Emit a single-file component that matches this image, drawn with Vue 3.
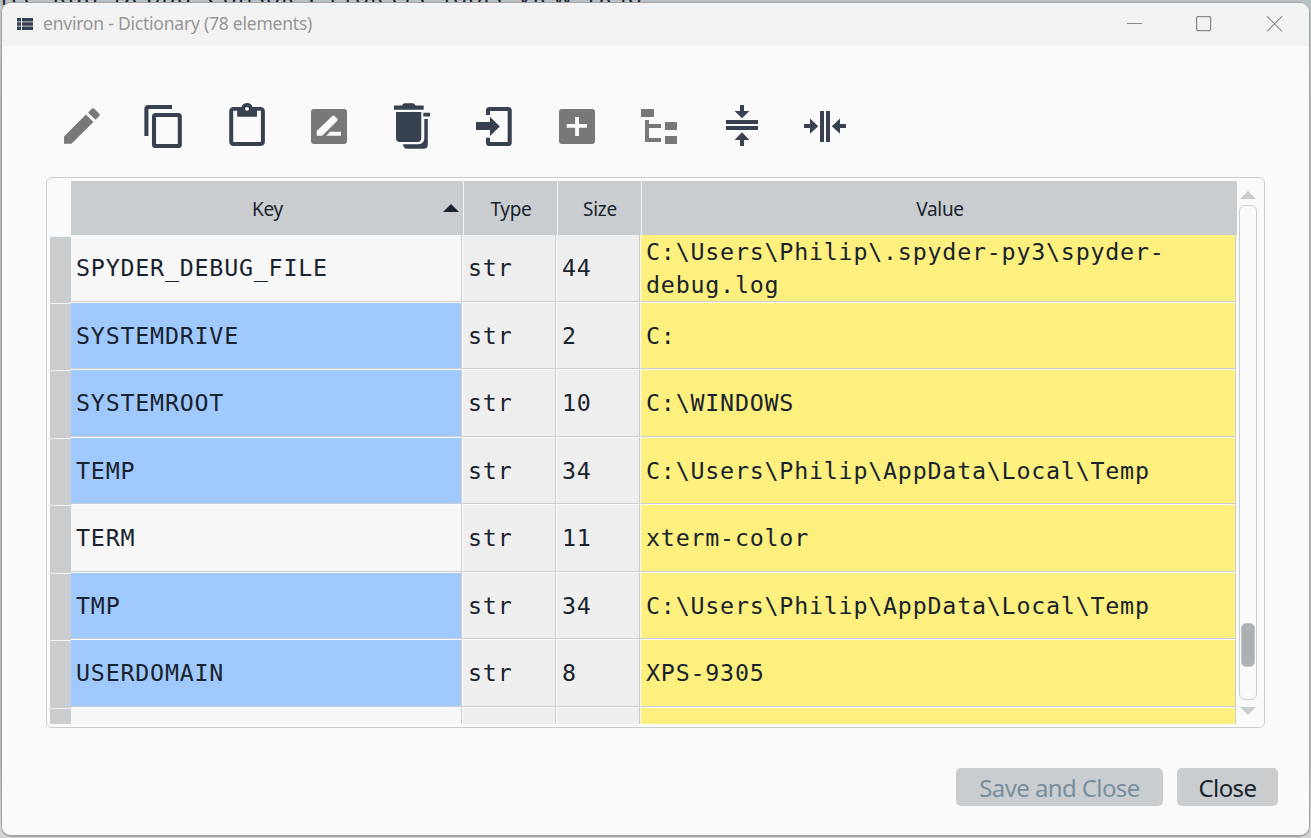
<script setup>
const rows = [
  { key: 'SPYDER_DEBUG_FILE', type: 'str', size: '44', value: ['C:\\Users\\Philip\\.spyder-py3\\spyder-', 'debug.log'], blue: false },
  { key: 'SYSTEMDRIVE', type: 'str', size: '2', value: ['C:'], blue: true },
  { key: 'SYSTEMROOT', type: 'str', size: '10', value: ['C:\\WINDOWS'], blue: true, tall: true },
  { key: 'TEMP', type: 'str', size: '34', value: ['C:\\Users\\Philip\\AppData\\Local\\Temp'], blue: true },
  { key: 'TERM', type: 'str', size: '11', value: ['xterm-color'], blue: false, tall: true },
  { key: 'TMP', type: 'str', size: '34', value: ['C:\\Users\\Philip\\AppData\\Local\\Temp'], blue: true },
  { key: 'USERDOMAIN', type: 'str', size: '8', value: ['XPS-9305'], blue: true, tall: true },
  { key: '', type: '', size: '', value: [], blue: false },
]
</script>

<template>
  <div class="desktop">
    <div class="menu-behind">rce&nbsp; Run&nbsp; Debug&nbsp; Consoles&nbsp; Projects&nbsp; Tools&nbsp; View&nbsp; Help</div>
    <div class="window">
      <header class="titlebar">
        <svg class="app-icon" width="16" height="12" viewBox="0 0 16 12">
          <path fill="#37414f" d="M0 0h4v3.4H0zM5 0h11v3.4H5zM0 4.3h4v3.4H0zM5 4.3h11v3.4H5zM0 8.6h4V12H0zM5 8.6h11V12H5z" />
        </svg>
        <span class="title">environ - Dictionary (78 elements)</span>
        <svg class="controls" width="156" height="16" viewBox="0 0 156 16" fill="none" stroke="#8c8c8c" stroke-width="1.1">
          <path d="M0 7.5h15" />
          <rect x="69.6" y=".6" width="14" height="14" rx="1.3" stroke-width="1.3" />
          <path d="M140 .3l15 15M155 .3l-15 15" />
        </svg>
      </header>

      <nav class="toolbar">
        <svg viewBox="57 101 82 50" class="off">
          <path transform="translate(58.1 102.4) scale(1.98 1.97)" d="M3 17.25V21h3.75L17.81 9.94l-3.75-3.75L3 17.25zM20.71 7.04c.39-.39.39-1.02 0-1.41l-2.34-2.34c-.39-.39-1.02-.39-1.41 0l-1.83 1.83 3.75 3.75 1.83-1.83z" />
        </svg>
        <svg viewBox="139 101 83 50">
          <path class="line" d="M146.4 136v-27a2 2 0 0 1 2-2H172" />
          <rect class="line" x="154" y="115" width="25.8" height="31" rx="1.6" />
        </svg>
        <svg viewBox="222 101 82 50">
          <path transform="translate(223.3 103) scale(1.98 1.95)" d="M19 2h-4.18C14.4.84 13.3 0 12 0S9.6.84 9.18 2H5c-1.1 0-2 .9-2 2v16c0 1.1.9 2 2 2h14c1.1 0 2-.9 2-2V4c0-1.1-.9-2-2-2zm-7 0c.55 0 1 .45 1 1s-.45 1-1 1-1-.45-1-1 .45-1 1-1zm7 18H5V4h2v3h10V4h2v16z" />
        </svg>
        <svg viewBox="304 101 83 50" class="off">
          <rect x="311" y="109" width="36" height="35" rx="3" />
          <path class="cut" d="M316.7 135.8V131l15.6-15q1.1-1 2.2 0l2.8 2.7q1 1.1 0 2.1l-15.1 15zM326.2 135.8l4-4.1H341v4.1z" />
        </svg>
        <svg viewBox="387 101 82 50">
          <path d="M394 105.4h7.6l2.4-2.2h9.4l2.4 2.2h7.9v4.3H394zM396 112h25.3v26a4 4 0 0 1-4 4H400a4 4 0 0 1-4-4zM423.3 112.7h6.7v3.7h-6.7zM424.3 119h3.5v25.7a4 4 0 0 1-4 4h-16.5a4 4 0 0 1-4.2-4.5h15.4a5.8 5.8 0 0 0 5.8-5.8z" />
        </svg>
        <svg viewBox="469 101 83 50">
          <path class="line" d="M488 115v-4.4a1.6 1.6 0 0 1 1.6-1.6h18.5a1.6 1.6 0 0 1 1.6 1.6v31.8a1.6 1.6 0 0 1-1.6 1.6h-18.5a1.6 1.6 0 0 1-1.6-1.6v-4.6" />
          <path d="M476 122h14v-5.2l9.8 9.6-9.8 9.6v-6h-14z" />
        </svg>
        <svg viewBox="552 101 82 50" class="off">
          <rect x="559" y="109" width="36" height="35" rx="3" />
          <path class="cut" d="M575.1 117h3.9v7h8v3.7h-8v8.3h-3.9v-8.3h-8.4V124h8.4z" />
        </svg>
        <svg viewBox="634 101 83 50" class="off">
          <path d="M641 109h13v8h-13zM645 120h4v4h12v4h-12v10h12v4h-16zM665 122h12v8h-12zM665 136h12v8h-12z" />
        </svg>
        <svg viewBox="717 101 82 50">
          <path d="M740 105h4v6h5.4l-7.4 7.2-7.4-7.2h5.4zM726 120h32v4h-32zM726 126h32v4h-32zM742 132.2l7.4 7.8H744v6h-4v-6h-5.4z" />
        </svg>
        <svg viewBox="799 101 83 50">
          <path d="M804 124h6v-5.4l8.2 7.6-8.2 7.6V128h-6zM820 111h4v31h-4zM826 111h4v31h-4zM846 124h-6v-5.4l-8.2 7.6 8.2 7.6V128h6z" />
        </svg>
      </nav>

      <main class="frame">
        <div class="gutter">
          <i v-for="(r, i) in rows" :key="i" :class="{ tall: r.tall }"></i>
        </div>
        <div class="table">
          <div class="head">
            <span>Key
              <svg class="sort" width="16" height="8" viewBox="0 0 16 8"><path fill="#19232d" d="M0 8l8-8 8 8z" /></svg>
            </span>
            <span>Type</span>
            <span>Size</span>
            <span>Value</span>
          </div>
          <div v-for="(r, i) in rows" :key="i" class="row" :class="{ tall: r.tall }">
            <div class="cell" :class="r.blue ? 'blue' : 'plain'">{{ r.key }}</div>
            <div class="cell grey">{{ r.type }}</div>
            <div class="cell grey">{{ r.size }}</div>
            <div class="cell yellow"><div v-for="l in r.value" :key="l">{{ l }}</div></div>
          </div>
        </div>
        <div class="scroll">
          <svg width="16" height="8" viewBox="0 0 16 8"><path fill="#c9cdd0" d="M0 8l8-8 8 8z" /></svg>
          <div class="track"><div class="thumb"></div></div>
          <svg width="16" height="8" viewBox="0 0 16 8"><path fill="#c9cdd0" d="M0 0h16L8 8z" /></svg>
        </div>
      </main>

      <footer class="actions">
        <button class="save" disabled><span>Save and Close</span></button>
        <button class="close"><span>Close</span></button>
      </footer>
    </div>
  </div>
</template>

<style>
body { margin: 0; overflow: hidden; }
</style>

<style scoped>
* { box-sizing: border-box; }
.desktop {
  position: relative;
  width: 1311px;
  height: 838px;
  padding: 2px 1px 1px 1px;
  overflow: hidden;
  background: linear-gradient(#b9c0c4 0 40px, #b4b6b8 100px, #b4b6b8 770px, #d4d4d4 830px);
  color: #19232d;
  font-family: "Noto Sans", "Open Sans", sans-serif;
}
.menu-behind {
  position: absolute;
  left: 1px;
  top: -18px;
  line-height: 28px;
  font-size: 23px;
  letter-spacing: 1.3px;
  white-space: nowrap;
}
.window {
  position: relative;
  width: 1309px;
  height: 835px;
  border: 1px solid #a2a4a5;
  border-bottom-width: 2px;
  border-radius: 10px;
  background: #fafafa;
  overflow: hidden;
}
.titlebar {
  display: flex;
  align-items: center;
  height: 43px;
  padding: 0 26px 1px 16px;
  background: #f2f2f2;
}
.app-icon { margin: -1px 0 0 -1px; }
.title {
  margin: -2px 0 0 10px;
  font-size: 17.5px;
  line-height: 24px;
  letter-spacing: -0.22px;
  color: #969696;
  white-space: nowrap;
}
.controls { margin-left: auto; }
.toolbar {
  display: flex;
  height: 50px;
  margin: 55px 0 0 55px;
}
.toolbar svg { width: 82px; height: 50px; fill: #37414f; flex: none; }
.toolbar svg:nth-child(even) { width: 83px; }
.toolbar svg.off { fill: #787878; }
.toolbar .line { fill: none; stroke: #37414f; stroke-width: 4.1; }
.toolbar .cut { fill: #fafafa; }
.frame {
  display: flex;
  width: 1219px;
  height: 551px;
  margin: 26px 0 0 44px;
  padding: 3px;
  border: 1px solid #c9cdd0;
  border-radius: 6px;
}
.gutter {
  width: 21px;
  height: 543px;
  padding-top: 55px;
  overflow: hidden;
}
.gutter i {
  display: block;
  height: 67px;
  border-top: 1px solid #f4f5f5;
  background: #c9cdd0;
}
.gutter i.tall { height: 68px; }
.table { width: 1166px; height: 543px; overflow: hidden; }
.head {
  display: grid;
  grid-template-columns: 392px 93px 83px 595px;
  column-gap: 1px;
  height: 54px;
  background: #f4f5f5;
  font-size: 19px;
}
.head span {
  position: relative;
  display: flex;
  align-items: center;
  justify-content: center;
  padding: 2px 0 0 1px;
  background: #c9cdd0;
  letter-spacing: -0.3px;
}
.sort { position: absolute; right: 4px; top: 23px; }
.row {
  display: grid;
  grid-template-columns: 391px 94px 84px 596px;
  height: 67px;
}
.row.tall { height: 68px; }
.cell {
  display: flex;
  flex-direction: column;
  justify-content: center;
  padding: 0 0 1px 5px;
  border-top: 1px solid #fdfdfd;
  border-left: 1px solid #fdfdfd;
  border-right: 1px solid #c9cdd0;
  border-bottom: 1px solid #c9cdd0;
  font-family: "DejaVu Sans Mono", monospace;
  font-size: 23.3px;
  line-height: 33px;
  letter-spacing: 0.79px;
  white-space: pre;
  overflow: hidden;
}
.cell:first-child { border-left: 0; }
.row:nth-child(2) .cell { border-top: 0; }
.plain { background: #f7f7f7; }
.blue { background: #a0caff; }
.grey { background: #eeeeee; }
.yellow { background: #fdf07e; }
.scroll {
  display: flex;
  flex-direction: column;
  align-items: center;
  width: 18px;
  margin-left: 2px;
  padding-top: 10px;
}
.scroll svg { flex: none; }
.track {
  width: 18px;
  height: 495px;
  margin: 6px 0 7px;
  padding: 417px 1px 0;
  border: 1.5px solid #c9cdd0;
  border-radius: 6px;
}
.thumb {
  height: 44px;
  border: 1px solid #c2c6c9;
  border-radius: 5px;
  background: #acb1b4;
}
.actions {
  display: flex;
  justify-content: flex-end;
  gap: 14px;
  margin: 40px 31px 0 0;
}
button {
  display: flex;
  align-items: center;
  justify-content: center;
  height: 38px;
  padding: 1px 0 0;
  border: 0;
  border-radius: 5px;
  background: #c9cdd0;
  color: #19232d;
  font-family: "Noto Sans", "Open Sans", sans-serif;
  font-size: 24px;
  line-height: 30px;
  letter-spacing: -0.6px;
  white-space: nowrap;
}
.save { width: 207px; color: #788d9c; }
.close { width: 101px; }
</style>
